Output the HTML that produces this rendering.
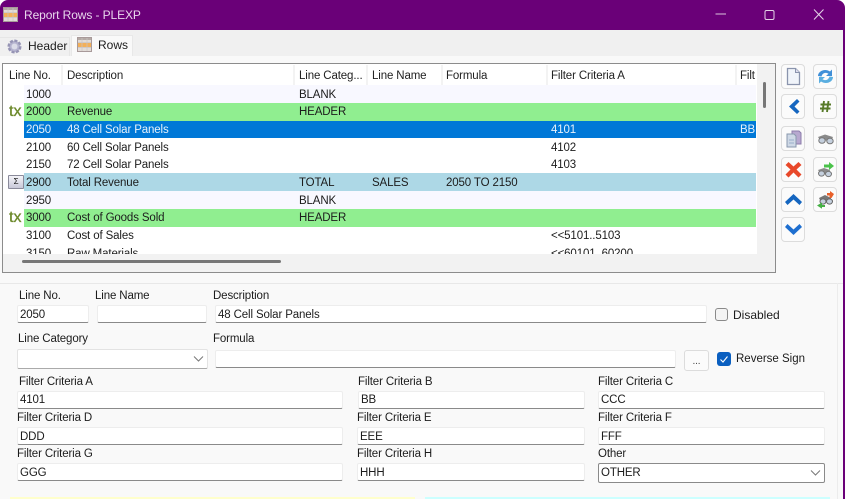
<!DOCTYPE html>
<html><head><meta charset="utf-8">
<style>
html,body{margin:0;padding:0}
body{width:845px;height:499px;position:relative;overflow:hidden;background:#f9f9f9;font-family:"Liberation Sans",sans-serif;font-size:11.5px;letter-spacing:-.13px;color:#1c1c1c}
.a{position:absolute;white-space:nowrap}
.t{position:absolute;white-space:nowrap;line-height:14px}
.r{position:absolute;left:24px;width:732px;height:18px}
.r span{position:absolute;top:2px;line-height:14px;white-space:nowrap}
.r.s span{top:3px}
.h{position:absolute;top:69px;line-height:14px;white-space:nowrap;color:#222}
.sep{position:absolute;top:65px;width:2px;height:20px;background:#f3f3f3}
.i{position:absolute;background:#fff;border:1px solid #ededed;border-bottom:1px solid #8a8a8a;border-radius:2px;box-sizing:border-box;height:18px;line-height:16px;padding-left:2px;white-space:nowrap;overflow:hidden}
.i.d{line-height:18px}
.b{position:absolute;width:24px;height:25px;box-sizing:border-box;background:#fbfbfb;border:1px solid #dcdcdc;border-radius:4px}
.b svg{position:absolute;left:2px;top:2px}
.tx{position:absolute;left:9px;font-size:16px;line-height:18px;color:#6d8a2c;-webkit-text-stroke:.3px #6d8a2c;letter-spacing:0}
</style></head><body>
<div class="a" style="left:0;top:0;width:845px;height:30px;background:#6a0078"></div>
<div class="a" style="left:0;top:0;width:8px;height:8px;background:#fff;clip-path:path('M0 0H8A8 8 0 0 0 0 8Z')"></div>
<div class="a" style="right:0;top:0;width:8px;height:8px;background:#fff;clip-path:path('M0 0H8V8A8 8 0 0 0 0 0Z')"></div>
<div class="a" style="left:843px;top:30px;width:2px;height:469px;background:#6a0078"></div>
<svg class="a" style="left:3px;top:7px" width="15" height="15" viewBox="0 0 15 15"><rect width="15" height="15" fill="#e2dcd8"/><rect width="15" height="3" fill="#b5aaa6"/><rect y="6" width="15" height="4" fill="#f2b05a"/><path d="M0 5.500H15M0 10.500H15M5 0V15M10 0V15" stroke="#c9c4c4" stroke-width=".7"/><rect x=".5" y=".5" width="14" height="14" fill="none" stroke="#a89a9a"/></svg>
<div class="t" style="left:24px;top:7px;color:#e8d6ec;font-size:12px;letter-spacing:-.1px;line-height:16px">Report Rows - PLEXP</div>
<svg class="a" style="left:710px;top:8px" width="135" height="16" viewBox="0 0 135 16"><path d="M5.500 6H16" stroke="#d9c4dd" stroke-width="1"/><rect x="55" y="2.500" width="9" height="9" rx="1.500" fill="none" stroke="#e4d4e7"/><path d="M104 1.500L113.500 11.500M113.500 1.500L104 11.500" stroke="#e4d4e7"/></svg>

<div class="a" style="left:0;top:30px;width:843px;height:26px;background:#f0f0f0"></div>
<div class="a" style="left:0;top:37px;width:70px;height:19px;background:#f0f0f0;border-top:1px solid #e6e6e6;border-right:1px solid #e6e6e6;box-sizing:border-box"></div>
<div class="a" style="left:71px;top:35px;width:62px;height:21px;background:#f9f9f9;border:1px solid #e8e8e8;border-bottom:0;box-sizing:border-box"></div>
<svg class="a" style="left:6px;top:38px" width="17" height="17" viewBox="0 0 17 17"><circle cx="8.500" cy="8.500" r="5.800" fill="#b5b3cf" stroke="#9694b4" stroke-width="2.400" stroke-dasharray="3 1.500"/><circle cx="8.500" cy="8.500" r="3" fill="#dcdce8"/></svg>
<div class="t" style="left:28px;top:39px;font-size:12px;letter-spacing:0">Header</div>
<svg class="a" style="left:77px;top:37px" width="15" height="15" viewBox="0 0 15 15"><rect width="15" height="15" fill="#e2dcd8"/><rect width="15" height="3" fill="#b5aaa6"/><rect y="6" width="15" height="4" fill="#f2b05a"/><path d="M0 5.500H15M0 10.500H15M5 0V15M10 0V15" stroke="#c9c4c4" stroke-width=".7"/><rect x=".5" y=".5" width="14" height="14" fill="none" stroke="#a89a9a"/></svg>
<div class="t" style="left:98px;top:38px;font-size:12px;letter-spacing:0">Rows</div>

<!-- grid -->
<div class="a" style="left:2px;top:63px;width:774px;height:210px;box-sizing:border-box;border:1px solid #8c8c8c;background:#fff;overflow:hidden">
<div class="a" style="left:-3px;top:-64px;width:845px;height:340px">
 <div class="a" style="left:3px;top:64px;width:772px;height:190px;overflow:hidden">
 <div class="a" style="left:-3px;top:-64px;width:845px;height:320px">
 <div class="h" style="left:9px">Line No.</div><div class="sep" style="left:61px"></div>
 <div class="h" style="left:67px">Description</div><div class="sep" style="left:293px"></div>
 <div class="h" style="left:299px">Line Categ...</div><div class="sep" style="left:366px"></div>
 <div class="h" style="left:372px">Line Name</div><div class="sep" style="left:441px"></div>
 <div class="h" style="left:446px">Formula</div><div class="sep" style="left:546px"></div>
 <div class="h" style="left:551px">Filter Criteria A</div><div class="sep" style="left:735px"></div>
 <div class="h" style="left:740px;width:16px;overflow:hidden">Filt</div>
 <div class="r s" style="top:85px;background:#f8f8ff"><span style="left:2px">1000</span><span style="left:275px">BLANK</span></div>
 <div class="r" style="top:103px;background:#90ee90"><span style="left:2px">2000</span><span style="left:43px">Revenue</span><span style="left:275px">HEADER</span></div>
 <div class="r" style="top:121px;height:17px;background:#0078d7;color:#e6f1fb"><span style="left:2px">2050</span><span style="left:43px">48 Cell Solar Panels</span><span style="left:527px">4101</span><span style="left:716px">BB</span></div>
 <div class="r s" style="top:138px"><span style="left:2px">2100</span><span style="left:43px">60 Cell Solar Panels</span><span style="left:527px">4102</span></div>
 <div class="r" style="top:156px"><span style="left:2px">2150</span><span style="left:43px">72 Cell Solar Panels</span><span style="left:527px">4103</span></div>
 <div class="r s" style="top:173px;background:#add8e6"><span style="left:2px">2900</span><span style="left:43px">Total Revenue</span><span style="left:275px">TOTAL</span><span style="left:348px">SALES</span><span style="left:422px">2050 TO 2150</span></div>
 <div class="r s" style="top:191px;background:#f8f8ff"><span style="left:2px">2950</span><span style="left:275px">BLANK</span></div>
 <div class="r" style="top:209px;background:#90ee90"><span style="left:2px">3000</span><span style="left:43px">Cost of Goods Sold</span><span style="left:275px">HEADER</span></div>
 <div class="r s" style="top:226px"><span style="left:2px">3100</span><span style="left:43px">Cost of Sales</span><span style="left:527px">&lt;&lt;5101..5103</span></div>
 <div class="r s" style="top:244px"><span style="left:2px">3150</span><span style="left:43px">Raw Materials</span><span style="left:527px">&lt;&lt;60101..60200</span></div>
 <div class="tx" style="top:103px">tx</div>
 <div class="tx" style="top:209px">tx</div>
 <div class="a" style="left:8px;top:175px;width:16px;height:14px;box-sizing:border-box;background:linear-gradient(#f4f4f8,#c8c8d8);border:1px solid #8a8a9a;border-radius:1px;font-size:8px;line-height:12px;text-align:center;color:#111">Σ</div>
 </div>
 </div>
 <div class="a" style="left:3px;top:254px;width:772px;height:18px;background:#f2f2f2"></div>
 <div class="a" style="left:22px;top:260px;width:259px;height:3px;border-radius:2px;background:#777"></div>
 <div class="a" style="left:757px;top:64px;width:18px;height:208px;background:#f2f2f2"></div>
 <div class="a" style="left:763px;top:82px;width:3px;height:26px;border-radius:2px;background:#777"></div>
</div>
</div>

<!-- toolbar -->
<div class="b" style="left:781px;top:64px"><svg width="19" height="19" viewBox="0 0 19 19"><path d="M3.500 1.500H11.500L15.500 5.500V17.500H3.500Z" fill="#f0f4fa" stroke="#8a94ad" stroke-width="1.300"/><path d="M11.500 1.500V5.500H15.500" fill="#dde" stroke="#8a94ad"/></svg></div>
<div class="b" style="left:813px;top:64px"><svg width="19" height="19" viewBox="0 0 19 19"><path d="M2 9C2 4 9 1 14 4.500L16 2.500V9H10L12.500 6.800C9.500 5 6.500 6 5.500 9.500Z" fill="#3f8fd8"/><path d="M17 10C17 15 10 18 5 14.500L3 16.500V10H9L6.500 12.200C9.500 14 12.500 13 13.500 9.500Z" fill="#5aaee0"/></svg></div>
<div class="b" style="left:781px;top:94px"><svg width="19" height="19" viewBox="0 0 19 19"><path d="M13 2L5 9.500L13 17L15.500 14.500L10.500 9.500L15.500 4.500Z" fill="#1566c0"/></svg></div>
<div class="b" style="left:813px;top:94px"><svg width="19" height="19" viewBox="0 0 19 19"><path d="M8 4L6.500 15M12.500 4L11 15M4.500 7.500H15M4 11.500H14.500" stroke="#577a28" stroke-width="1.900" fill="none"/></svg></div>
<div class="b" style="left:781px;top:126px"><svg width="19" height="19" viewBox="0 0 19 19"><path d="M8 2H15L17 4V15H8Z" fill="#b7a8cf" stroke="#8c7cab"/><path d="M3 5H10L12 7V18H3Z" fill="#cfd9e6" stroke="#8a98ad"/><path d="M5 11H10M5 14H10" stroke="#9ab0c9"/></svg></div>
<div class="b" style="left:813px;top:126px"><svg width="19" height="19" viewBox="0 0 19 19"><path d="M2 8L9 5.500L17 8L15 12L4 11Z" fill="#8a8a8a"/><ellipse cx="6" cy="11.500" rx="3.200" ry="2.800" fill="#c5d0de" stroke="#777"/><ellipse cx="14" cy="12" rx="3.200" ry="2.800" fill="#c5d0de" stroke="#777"/></svg></div>
<div class="b" style="left:781px;top:157px"><svg width="19" height="19" viewBox="0 0 19 19"><path d="M4.500 2L9.500 6.500L14.500 2L17.500 5L12.500 9.500L17.500 14.500L14.500 17.500L9.500 12.500L4.500 17.500L1.500 14.500L6.500 9.500L1.500 5Z" fill="#e8482a"/></svg></div>
<div class="b" style="left:813px;top:157px"><svg width="19" height="19" viewBox="0 0 19 19"><path d="M2 10L8 8L14 10L13 14L4 13Z" fill="#8a8a8a"/><ellipse cx="5.500" cy="13.500" rx="3" ry="2.600" fill="#c5d0de" stroke="#777"/><ellipse cx="12.500" cy="14" rx="3" ry="2.600" fill="#c5d0de" stroke="#777"/><path d="M8 4.500H13V2L18 6L13 10V7.500H8Z" fill="#4ac24a"/></svg></div>
<div class="b" style="left:781px;top:187px"><svg width="19" height="19" viewBox="0 0 19 19"><path d="M9.500 4L18 12L15.500 15L9.500 9.500L3.500 15L1 12Z" fill="#1566c0"/></svg></div>
<div class="b" style="left:813px;top:187px"><svg width="19" height="19" viewBox="0 0 19 19"><path d="M3 8L9 5L15 8L14 12L5 12Z" fill="#777"/><ellipse cx="7" cy="11.500" rx="3" ry="2.600" fill="#c5d0de" stroke="#666"/><ellipse cx="13.500" cy="11.500" rx="3" ry="2.600" fill="#c5d0de" stroke="#666"/><path d="M11 3H14V1L18 4L15.500 8H13.500V5.500H11Z" fill="#e8602a"/><path d="M9 15H6V12.500L1 15.500L6 18.800V17H9Z" fill="#45b045"/></svg></div>
<div class="b" style="left:781px;top:217px"><svg width="19" height="19" viewBox="0 0 19 19"><path d="M9.500 15L18 7L15.500 4L9.500 9.500L3.500 4L1 7Z" fill="#1e6fd0"/></svg></div>

<!-- divider -->
<div class="a" style="left:0;top:283px;width:843px;height:1px;background:#e8e8e8"></div>
<div class="a" style="left:837px;top:283px;width:1px;height:216px;background:#ececec"></div>

<!-- form -->
<div class="t" style="left:19px;top:289px">Line No.</div>
<div class="t" style="left:95px;top:289px">Line Name</div>
<div class="t" style="left:213px;top:289px">Description</div>
<div class="i d" style="left:17px;top:305px;width:72px">2050</div>
<div class="i d" style="left:97px;top:305px;width:110px"></div>
<div class="i d" style="left:215px;top:305px;width:492px">48 Cell Solar Panels</div>
<div class="a" style="left:715px;top:308px;width:13px;height:13px;box-sizing:border-box;border:1px solid #8a8a8a;border-radius:3px;background:#f4f4f4"></div>
<div class="t" style="left:733px;top:308px;font-size:12px;letter-spacing:0">Disabled</div>

<div class="t" style="left:18px;top:332px">Line Category</div>
<div class="t" style="left:213px;top:332px">Formula</div>
<div class="i" style="left:17px;top:349px;width:191px;height:20px;border:1px solid #e3e3e3;border-bottom:1px solid #aaa"></div>
<svg class="a" style="left:193px;top:355px" width="11" height="8" viewBox="0 0 11 8"><path d="M1 1.500L5.500 6L10 1.500" stroke="#777" fill="none"/></svg>
<div class="i" style="left:215px;top:350px;width:461px"></div>
<div class="a" style="left:684px;top:350px;width:25px;height:21px;box-sizing:border-box;border:1px solid #dcdcdc;border-radius:3px;background:#fbfbfb;text-align:center;line-height:21px;font-size:10px;color:#444">...</div>
<div class="a" style="left:717px;top:352px;width:14px;height:14px;border-radius:3px;background:#0a5fc0"></div>
<svg class="a" style="left:717px;top:352px" width="14" height="14" viewBox="0 0 14 14"><path d="M3.500 7.500L6 10L10.500 4.500" stroke="#fff" fill="none" stroke-width="1.100"/></svg>
<div class="t" style="left:736px;top:352px;font-size:11.5px;letter-spacing:0">Reverse Sign</div>

<div class="t" style="left:19px;top:375px">Filter Criteria A</div>
<div class="t" style="left:358px;top:375px">Filter Criteria B</div>
<div class="t" style="left:598px;top:375px">Filter Criteria C</div>
<div class="i" style="left:17px;top:391px;width:326px">4101</div>
<div class="i" style="left:358px;top:391px;width:227px">BB</div>
<div class="i" style="left:598px;top:391px;width:227px">CCC</div>
<div class="t" style="left:17px;top:411px">Filter Criteria D</div>
<div class="t" style="left:357px;top:411px">Filter Criteria E</div>
<div class="t" style="left:598px;top:411px">Filter Criteria F</div>
<div class="i d" style="left:17px;top:427px;width:326px">DDD</div>
<div class="i d" style="left:357px;top:427px;width:228px">EEE</div>
<div class="i d" style="left:598px;top:427px;width:227px">FFF</div>
<div class="t" style="left:17px;top:447px">Filter Criteria G</div>
<div class="t" style="left:357px;top:447px">Filter Criteria H</div>
<div class="t" style="left:598px;top:447px">Other</div>
<div class="i d" style="left:17px;top:463px;width:326px">GGG</div>
<div class="i d" style="left:357px;top:463px;width:228px">HHH</div>
<div class="i" style="left:598px;top:463px;width:227px;height:20px;border:1px solid #8a8a8a;background:#fff;line-height:18px">OTHER</div>
<svg class="a" style="left:810px;top:469px" width="11" height="8" viewBox="0 0 11 8"><path d="M1 1.500L5.500 6L10 1.500" stroke="#777" fill="none"/></svg>

<div class="a" style="left:10px;top:497px;width:405px;height:2px;background:#ffffcc"></div>
<div class="a" style="left:425px;top:497px;width:405px;height:2px;background:#ccffff"></div>
</body></html>
